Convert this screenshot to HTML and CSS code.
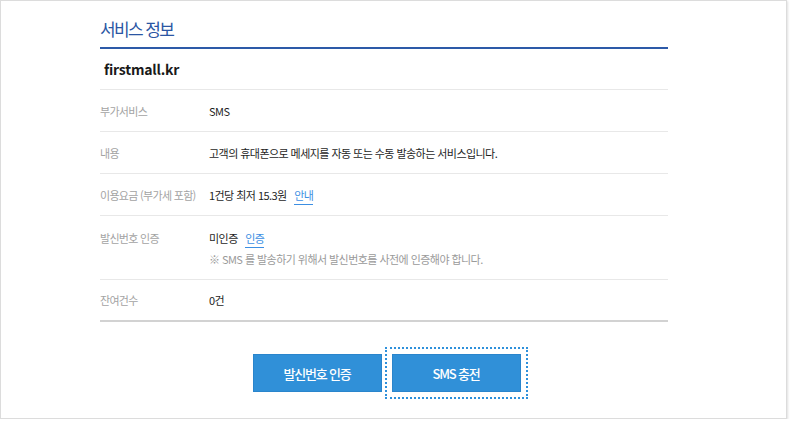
FILE: index.html
```html
<!DOCTYPE html>
<html lang="ko">
<head>
<meta charset="utf-8">
<title>서비스 정보</title>
<link rel="stylesheet" href="styles.css">
</head>
<body>
<div class="frame">
  <section class="panel">
    <h2 class="title">서비스 정보</h2>
    <div class="domain">firstmall.kr</div>
    <dl class="info">
      <div class="row">
        <dt>부가서비스</dt>
        <dd>SMS</dd>
      </div>
      <div class="row">
        <dt>내용</dt>
        <dd>고객의 휴대폰으로 메세지를 자동 또는 수동 발송하는 서비스입니다.</dd>
      </div>
      <div class="row">
        <dt>이용요금 (부가세 포함)</dt>
        <dd>1건당 최저 15.3원 <a class="link" href="#">안내</a></dd>
      </div>
      <div class="row row-tall">
        <dt>발신번호 인증</dt>
        <dd>
          <div>미인증 <a class="link" href="#">인증</a></div>
          <p class="note">※ SMS 를 발송하기 위해서 발신번호를 사전에 인증해야 합니다.</p>
        </dd>
      </div>
      <div class="row row-last">
        <dt>잔여건수</dt>
        <dd>0건</dd>
      </div>
    </dl>
    <div class="actions">
      <button class="btn" type="button">발신번호 인증</button>
      <button class="btn btn-focus" type="button">SMS 충전</button>
    </div>
  </section>
</div>
</body>
</html>
```

FILE: styles.css
```css
* { box-sizing: border-box; }

html, body {
  margin: 0;
  padding: 0;
  background: #ffffff;
}

body {
  font-family: "Noto Sans CJK KR", "Noto Sans", sans-serif;
  color: #222;
}

.frame {
  width: 787px;
  height: 419px;
  border: 1px solid #dcdcdc;
  box-shadow: 1px 1px 2px rgba(0, 0, 0, 0.12);
  background: #fff;
  padding-left: 99px;
}

.panel {
  width: 568px;
}

.title {
  margin: 0;
  height: 48px;
  padding-top: 16px;
  font-size: 17px;
  line-height: 24px;
  font-weight: 400;
  letter-spacing: -1.6px;
  color: #2b56a3;
  border-bottom: 2px solid #2d5aa8;
}

.domain {
  height: 41px;
  padding-left: 4px;
  font-size: 14px;
  font-weight: 700;
  line-height: 41px;
  letter-spacing: -0.2px;
  color: #1a1a1a;
  border-bottom: 1px solid #e8e8e8;
}

.info {
  margin: 0;
}

.row {
  display: flex;
  align-items: center;
  height: 42px;
  border-bottom: 1px solid #e8e8e8;
  font-size: 11px;
  letter-spacing: -0.7px;
}

.row dt {
  width: 109px;
  flex: none;
  color: #a3a3a3;
}

.row dd {
  margin: 0;
  color: #1e1e1e;
  letter-spacing: -0.55px;
}

.row-tall {
  height: 64px;
  align-items: flex-start;
  padding-top: 14px;
}

.row-last {
  border-bottom: 2px solid #d2d2d2;
}

.link {
  color: #3d8fe3;
  text-decoration: none;
  border-bottom: 1px solid #3d8fe3;
  margin-left: 5px;
  padding-bottom: 1px;
}

.note {
  margin: 5px 0 0;
  color: #9a9a9a;
}

.actions {
  display: flex;
  justify-content: center;
  gap: 10px;
  padding-top: 32px;
  padding-left: 5px;
}

.btn {
  width: 129px;
  height: 38px;
  border: 1px solid #2a85cc;
  background: #3090d8;
  color: #fff;
  font-family: "Noto Sans CJK KR", "Noto Sans", sans-serif;
  font-size: 13px;
  font-weight: 500;
  letter-spacing: -1.2px;
  cursor: pointer;
}

.btn-focus {
  outline: 2px dotted #2e90db;
  outline-offset: 5px;
}
```
